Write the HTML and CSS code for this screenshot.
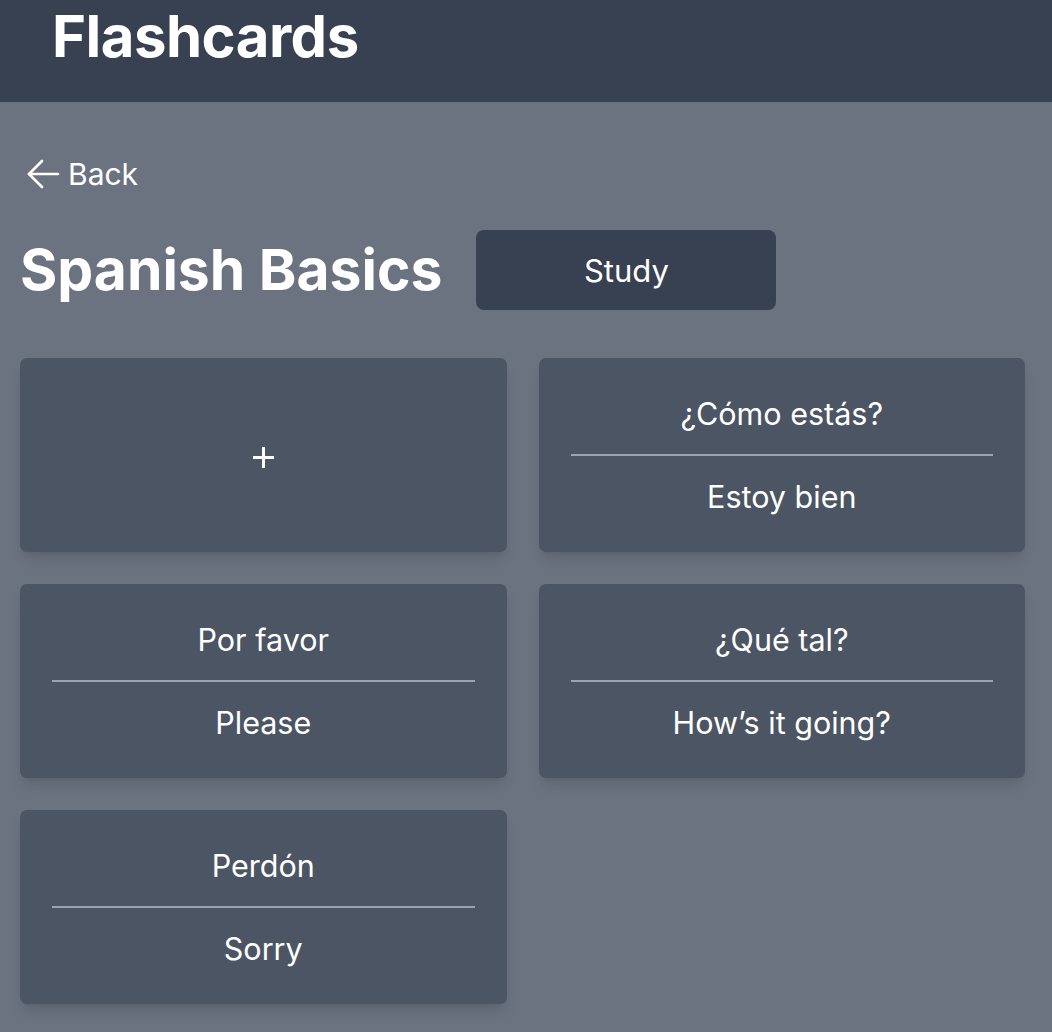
FILE: index.html
```html
<!DOCTYPE html>
<html lang="en">
<head>
<meta charset="utf-8">
<title>Flashcards</title>
<link rel="stylesheet" href="styles.css">
</head>
<body>
<header class="topbar">
  <h1 class="brand">Flashcards</h1>
</header>
<main class="page">
  <a class="back" href="#">
    <svg class="back-icon" viewBox="0 0 34 30" width="34" height="30" fill="none" stroke="currentColor" stroke-width="2.7" stroke-linecap="round" stroke-linejoin="round"><path d="M32 15H3"/><path d="M16 2L3 15l13 13"/></svg>
    <span>Back</span>
  </a>
  <div class="title-row">
    <h2 class="deck-title">Spanish Basics</h2>
    <button class="study-btn">Study</button>
  </div>
  <section class="grid">
    <div class="card add-card">
      <svg class="plus" viewBox="0 0 21 21" width="21" height="21" fill="none" stroke="currentColor" stroke-width="3"><path d="M10.5 0v21M0 10.5h21"/></svg>
    </div>
    <div class="card">
      <div class="front">¿Cómo estás?</div>
      <div class="divider"></div>
      <div class="backside">Estoy bien</div>
    </div>
    <div class="card">
      <div class="front">Por favor</div>
      <div class="divider"></div>
      <div class="backside">Please</div>
    </div>
    <div class="card">
      <div class="front">¿Qué tal?</div>
      <div class="divider"></div>
      <div class="backside">How’s it going?</div>
    </div>
    <div class="card">
      <div class="front">Perdón</div>
      <div class="divider"></div>
      <div class="backside">Sorry</div>
    </div>
  </section>
</main>
</body>
</html>
```

FILE: styles.css
```css
* { box-sizing: border-box; }
html, body { margin: 0; padding: 0; }
body {
  background: #6b7280;
  color: #ffffff;
  font-family: Inter, "Noto Sans", "Liberation Sans", sans-serif;
  min-height: 100vh;
}
.topbar {
  background: #374151;
  height: 102px;
  padding-left: 52px;
}
.brand {
  margin: 0;
  font-size: 58px;
  font-weight: 700;
  line-height: 72px;
  letter-spacing: -0.5px;
}
.page {
  padding: 52px 27px 28px 20px;
}
.back {
  display: inline-flex;
  align-items: center;
  gap: 8px;
  color: #ffffff;
  text-decoration: none;
  font-size: 30px;
  line-height: 40px;
  padding-left: 6px;
}
.back-icon { display: block; }
.title-row {
  display: flex;
  align-items: center;
  gap: 34px;
  margin-top: 36px;
}
.deck-title {
  margin: 0;
  font-size: 57px;
  font-weight: 700;
  line-height: 64px;
}
.study-btn {
  width: 300px;
  height: 80px;
  border: none;
  border-radius: 8px;
  background: #374151;
  color: #ffffff;
  font-family: inherit;
  font-size: 31px;
}
.grid {
  display: grid;
  grid-template-columns: 1fr 1fr;
  gap: 32px;
  margin-top: 48px;
}
.card {
  height: 194px;
  background: #4b5563;
  border-radius: 7px;
  box-shadow: 0 10px 15px -3px rgba(0,0,0,0.1), 0 4px 6px -4px rgba(0,0,0,0.1);
  display: flex;
  flex-direction: column;
  justify-content: center;
  padding: 0 32px;
  text-align: center;
  font-size: 30.5px;
}
.add-card { align-items: center; }
.plus { display: block; margin-top: 4px; }
.front { line-height: 40px; margin-bottom: 20px; }
.divider { height: 2px; background: #9ca3af; }
.backside { line-height: 40px; margin-top: 21px; }
```
